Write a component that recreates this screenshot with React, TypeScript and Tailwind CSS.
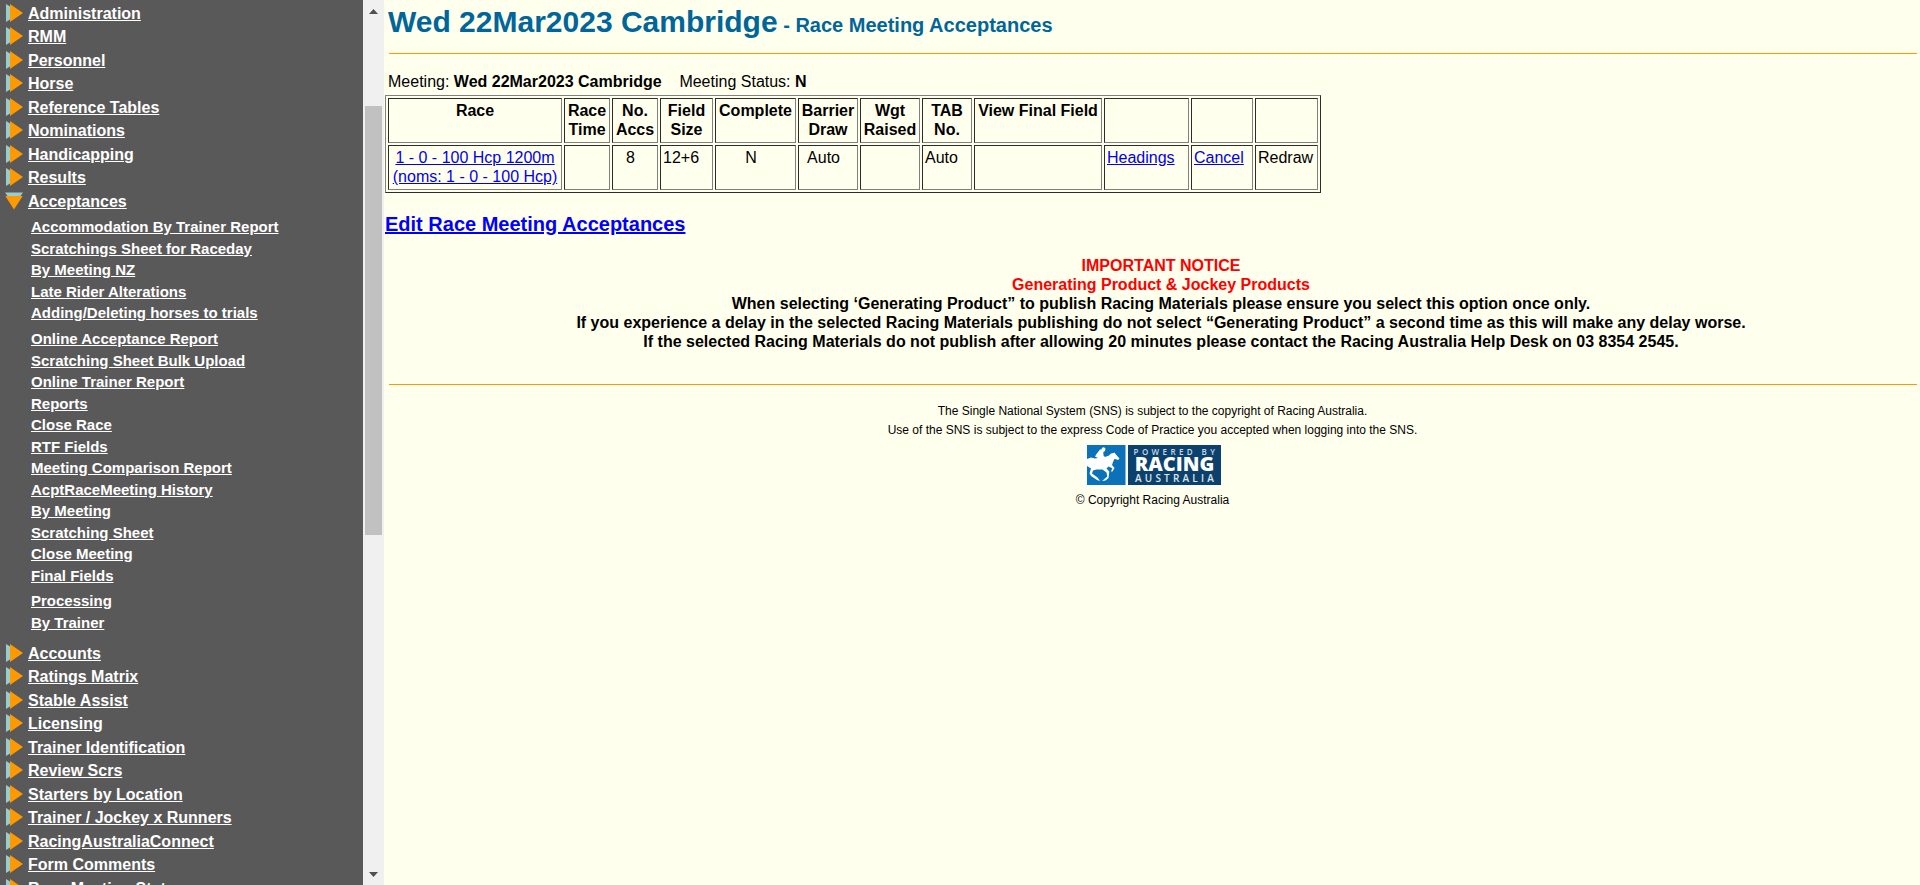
import React from "react";

const topItems = [
  "Administration",
  "RMM",
  "Personnel",
  "Horse",
  "Reference Tables",
  "Nominations",
  "Handicapping",
  "Results",
  "Acceptances",
];

const subGroups = [
  [
    "Accommodation By Trainer Report",
    "Scratchings Sheet for Raceday",
    "By Meeting NZ",
    "Late Rider Alterations",
    "Adding/Deleting horses to trials",
  ],
  [
    "Online Acceptance Report",
    "Scratching Sheet Bulk Upload",
    "Online Trainer Report",
    "Reports",
    "Close Race",
    "RTF Fields",
    "Meeting Comparison Report",
    "AcptRaceMeeting History",
    "By Meeting",
    "Scratching Sheet",
    "Close Meeting",
    "Final Fields",
  ],
  ["Processing", "By Trainer"],
];

const bottomItems = [
  "Accounts",
  "Ratings Matrix",
  "Stable Assist",
  "Licensing",
  "Trainer Identification",
  "Review Scrs",
  "Starters by Location",
  "Trainer / Jockey x Runners",
  "RacingAustraliaConnect",
  "Form Comments",
  "Race Meeting Status",
];

function Arrow({ open }: { open: boolean }) {
  return open ? (
    <svg className="mt-[2px] h-[18px] w-[18px] shrink-0" viewBox="0 0 18 18" aria-hidden="true">
      <path d="M0 0.5H18L15.5 4H2.5Z" fill="#99cccc" />
      <path d="M0.3 4H17.7L9 17.5Z" fill="#ff9900" />
    </svg>
  ) : (
    <svg className="mt-[2px] h-[18px] w-[18px] shrink-0" viewBox="0 0 18 18" aria-hidden="true">
      <path d="M1 0L5 2.5V15.5L1 18Z" fill="#99cccc" />
      <path d="M5 0L18 9L5 18Z" fill="#ff9900" />
    </svg>
  );
}

function MenuList({ items }: { items: string[] }) {
  return (
    <ul>
      {items.map((label) => (
        <li key={label} className="flex items-start gap-[5px] pl-[5px] odd:h-[23px] even:h-6">
          <Arrow open={label === "Acceptances"} />
          <a href="#" className="text-[16px] leading-[23px] underline">
            {label}
          </a>
        </li>
      ))}
    </ul>
  );
}

function Sidebar() {
  return (
    <nav className="min-w-0 flex-1 overflow-hidden bg-[#595959] pt-[2px] font-bold whitespace-nowrap text-white">
      <MenuList items={topItems} />
      <div className="flex flex-col gap-1 pt-[3px] pb-[9px] pl-[31px]">
        {subGroups.map((group) => (
          <ul key={group[0]}>
            {group.map((label) => (
              <li key={label} className="text-[15px] leading-[21px] odd:h-[22px] even:h-[21px]">
                <a href="#" className="underline">
                  {label}
                </a>
              </li>
            ))}
          </ul>
        ))}
      </div>
      <MenuList items={bottomItems} />
    </nav>
  );
}

function ScrollTrack() {
  return (
    <div className="flex w-[21px] shrink-0 flex-col items-center bg-[#f0f0f0]" aria-hidden="true">
      <div className="flex h-[22px] items-center">
        <svg className="h-[5px] w-[9px]" viewBox="0 0 9 5">
          <path d="M0 5L4.5 0L9 5Z" fill="#505050" />
        </svg>
      </div>
      <div className="flex w-full flex-1 flex-col items-center">
        <div className="basis-[10%]" />
        <div className="w-[17px] basis-[51%] bg-[#c1c1c1]" />
      </div>
      <div className="flex h-[22px] items-center">
        <svg className="h-[5px] w-[9px]" viewBox="0 0 9 5">
          <path d="M0 0L4.5 5L9 0Z" fill="#505050" />
        </svg>
      </div>
    </div>
  );
}

const columns = [
  { head: ["Race"], width: "w-[174px]" },
  { head: ["Race", "Time"], width: "w-[46px]" },
  { head: ["No.", "Accs"], width: "w-[46px]" },
  { head: ["Field", "Size"], width: "w-[53px]" },
  { head: ["Complete"], width: "w-[81px]" },
  { head: ["Barrier", "Draw"], width: "w-[60px]" },
  { head: ["Wgt", "Raised"], width: "w-[60px]" },
  { head: ["TAB", "No."], width: "w-[50px]" },
  { head: ["View Final Field"], width: "w-[128px]" },
  { head: [], width: "w-[85px]" },
  { head: [], width: "w-[62px]" },
  { head: [], width: "w-[63px]" },
];

const cell =
  "border border-t-[#2c2c2c] border-r-[#808080] border-b-[#808080] border-l-[#2c2c2c] px-[2px] pt-[2px] pb-[3px] align-top";
const link = "text-[#0000ee] underline";

function RaceTable() {
  return (
    <table className="border-separate border-spacing-[2px] border border-t-[#808080] border-r-[#2c2c2c] border-b-[#2c2c2c] border-l-[#808080] whitespace-nowrap">
      <thead>
        <tr>
          {columns.map((c, i) => (
            <th key={i} className={`${cell} ${c.width} text-center font-bold`}>
              {c.head.map((line) => (
                <span key={line} className="block">
                  {line}
                </span>
              ))}
            </th>
          ))}
        </tr>
      </thead>
      <tbody>
        <tr>
          <td className={`${cell} text-center`}>
            <a href="#" className={link}>
              1 - 0 - 100 Hcp 1200m
              <br />
              (noms: 1 - 0 - 100 Hcp)
            </a>
          </td>
          <td className={cell} />
          <td className={`${cell} text-center`}>8&nbsp;&nbsp;</td>
          <td className={cell}>12+6</td>
          <td className={`${cell} text-center`}>N&nbsp;&nbsp;</td>
          <td className={`${cell} text-center`}>Auto&nbsp;&nbsp;</td>
          <td className={cell} />
          <td className={cell}>Auto</td>
          <td className={cell} />
          <td className={cell}>
            <a href="#" className={link}>
              Headings
            </a>
          </td>
          <td className={cell}>
            <a href="#" className={link}>
              Cancel
            </a>
          </td>
          <td className={cell}>Redraw</td>
        </tr>
      </tbody>
    </table>
  );
}

function Logo() {
  return (
    <svg className="mt-[3px] mb-1 h-[44px] w-[139px]" viewBox="0 0 139 44" role="img" aria-label="Powered by Racing Australia">
      <rect width="139" height="44" fill="#fdfefb" />
      <rect x="4" y="2" width="38.5" height="40" fill="#0b72ba" />
      <rect x="45" y="2" width="93" height="40" fill="#0d416d" />
      <path
        transform="translate(2 0)"
        d="M2 16L6 14.500L10 15.500L13 15L10 13.500L11.500 11L15 6.500L16.500 6.500L17 4.800L19 4.200L20.500 5.500L20 8L18.300 9L18.500 12.500L20 14L24 12.500L26 10.500L28.500 10L29.500 9.500L30.500 11L34.500 15.500L33 17L29.500 15.800L28 19L27 22L29.500 25L27.500 28.500L26 28.500L27.300 25.300L23.500 23.500L21.500 25.500L24.300 28.500L23.500 35L20.500 37.500L17 38L20 35.500L22.300 33.500L21.500 29.500L17.500 26.500L11.500 26.500L8 27.500L7 30.500L12.500 34.500L15 38L12 37L6 33L4.500 30.500L6 25.500L2 23Z"
        fill="#fff"
      />
      <g fill="#fff" fontFamily="'Open Sans', 'Liberation Sans', sans-serif" textAnchor="middle">
        <text x="93" y="11.700" fontSize="8" fontWeight="600" letterSpacing="3.400" fill="#c8d8e4">
          POWERED BY
        </text>
        <text x="91.500" y="28.400" fontSize="20" fontWeight="800">
          RACING
        </text>
        <text x="93" y="38.700" fontSize="10" fontWeight="600" letterSpacing="3.200" fill="#dce6ee">
          AUSTRALIA
        </text>
      </g>
    </svg>
  );
}

export default function App() {
  return (
    <div className="flex h-screen overflow-hidden bg-[#ffffee] font-['Liberation_Sans',Arial,sans-serif] text-[16px] leading-[19px] text-black">
      <aside className="flex w-96 shrink-0">
        <Sidebar />
        <ScrollTrack />
      </aside>
      <main className="min-w-0 flex-1 pr-[3px] pl-px">
        <h1 className="pl-[3px] text-[30px] leading-[43px] font-bold text-[#006699]">
          Wed 22Mar2023 Cambridge<span className="text-[20px] leading-none"> - Race Meeting Acceptances</span>
        </h1>
        <hr className="mt-[10px] ml-1 border-[#ff9900]" />
        <p className="mt-[18px] mb-1 pl-[3px]">
          Meeting: <b>Wed 22Mar2023 Cambridge</b>&nbsp;&nbsp;&nbsp; Meeting Status: <b>N</b>
        </p>
        <RaceTable />
        <p className="mt-5 text-[20px] leading-[23px] font-bold">
          <a href="#" className="text-[#0000ff] underline">
            Edit Race Meeting Acceptances
          </a>
        </p>
        <section className="mt-5 pl-5 text-center font-bold">
          <h2 className="text-[#ff0000]">IMPORTANT NOTICE</h2>
          <h3 className="text-[#ff0000]">Generating Product &amp; Jockey Products</h3>
          <p>When selecting ‘Generating Product” to publish Racing Materials please ensure you select this option once only.</p>
          <p>
            If you experience a delay in the selected Racing Materials publishing do not select “Generating Product” a second
            time as this will make any delay worse.
          </p>
          <p>
            If the selected Racing Materials do not publish after allowing 20 minutes please contact the Racing Australia Help
            Desk on 03 8354 2545.
          </p>
        </section>
        <hr className="mt-[33px] ml-1 border-[#ff9900]" />
        <footer className="mt-[17px] flex flex-col items-center pl-[3px] text-[12px]">
          <p>The Single National System (SNS) is subject to the copyright of Racing Australia.</p>
          <p>Use of the SNS is subject to the express Code of Practice you accepted when logging into the SNS.</p>
          <Logo />
          <p>© Copyright Racing Australia</p>
        </footer>
      </main>
    </div>
  );
}
